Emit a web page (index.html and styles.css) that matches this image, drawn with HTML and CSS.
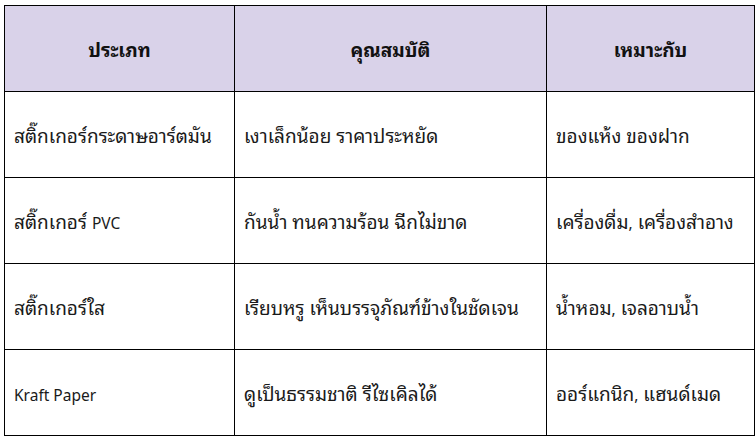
FILE: index.html
```html
<!DOCTYPE html>
<html lang="th">
<head>
<meta charset="utf-8">
<link rel="stylesheet" href="styles.css">
</head>
<body>
<table class="spec">
  <colgroup>
    <col class="c1"><col class="c2"><col class="c3">
  </colgroup>
  <thead>
    <tr><th>ประเภท</th><th>คุณสมบัติ</th><th>เหมาะกับ</th></tr>
  </thead>
  <tbody>
    <tr><td>สติ๊กเกอร์กระดาษอาร์ตมัน</td><td>เงาเล็กน้อย ราคาประหยัด</td><td>ของแห้ง ของฝาก</td></tr>
    <tr><td>สติ๊กเกอร์ <span class="lat">PVC</span></td><td>กันน้ำ ทนความร้อน ฉีกไม่ขาด</td><td>เครื่องดื่ม<span class="lat">,</span> เครื่องสำอาง</td></tr>
    <tr><td>สติ๊กเกอร์ใส</td><td>เรียบหรู เห็นบรรจุภัณฑ์ข้างในชัดเจน</td><td>น้ำหอม<span class="lat">,</span> เจลอาบน้ำ</td></tr>
    <tr><td><span class="lat">Kraft Paper</span></td><td>ดูเป็นธรรมชาติ รีไซเคิลได้</td><td>ออร์แกนิก<span class="lat">,</span> แฮนด์เมด</td></tr>
  </tbody>
</table>
</body>
</html>
```
FILE: styles.css
```css
html, body {
  margin: 0;
  padding: 0;
  background: #ffffff;
}
body {
  padding: 5px 0 0 4px;
  font-family: "Noto Sans Thai Looped", "Noto Sans", sans-serif;
  font-size: 19px;
  color: #1a1a1a;
}
.spec {
  border-collapse: collapse;
  table-layout: fixed;
  width: 750px;
}
.c1 { width: 230px; }
.c2 { width: 312px; }
.c3 { width: 208px; }
.spec th,
.spec td {
  border: 1px solid #000000;
  height: 86px;
  padding: 0 9px;
  vertical-align: middle;
  box-sizing: border-box;
}
.spec th {
  background: #d9d2e9;
  font-weight: 700;
  text-align: center;
  color: #111111;
}
.spec td {
  text-align: left;
  font-weight: 400;
}
.lat {
  font-family: "Noto Sans", sans-serif;
  font-size: 15.5px;
}
```
